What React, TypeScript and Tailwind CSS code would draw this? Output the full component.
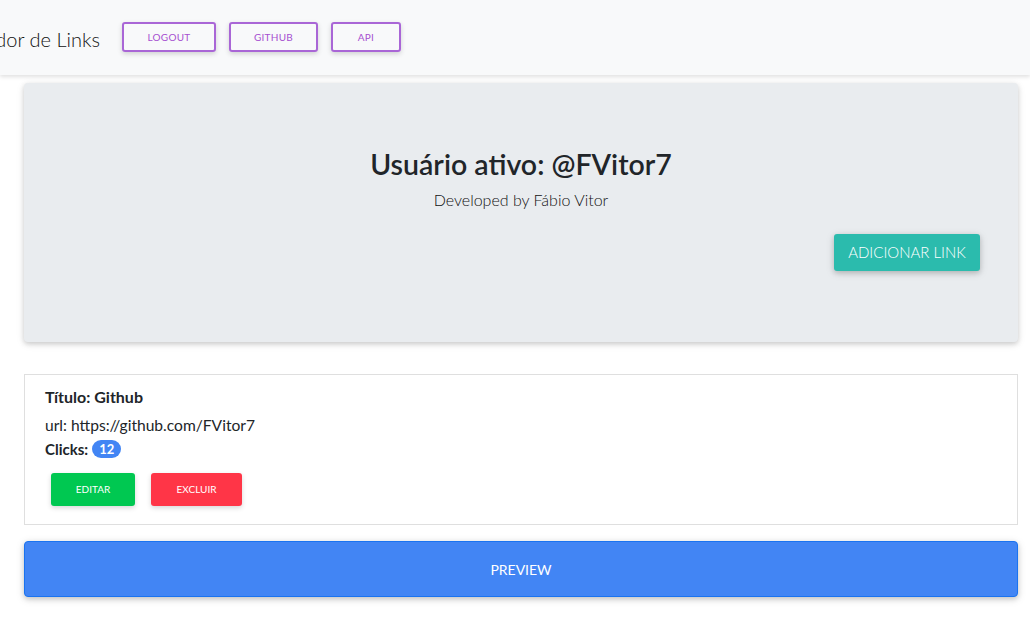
import React from 'react';

const font = { fontFamily: 'Lato, "Open Sans", sans-serif' };

function NavButton({ label, width }: { label: string; width: string }) {
  return (
    <button
      className={`h-[30px] ${width} border-2 border-[#a966d6] rounded-[3px] bg-transparent text-[10px] font-normal text-[#a64fd0] uppercase tracking-wide shadow-[0_2px_5px_rgba(0,0,0,0.16)]`}
    >
      {label}
    </button>
  );
}

export default function App() {
  return (
    <div className="min-h-[626px] w-[1030px] bg-white overflow-hidden" style={font}>
      {/* Navbar */}
      <nav className="h-[75px] bg-[#f8f9fa] shadow-[0_2px_4px_rgba(0,0,0,0.12)] flex items-center relative z-10">
        <div className="w-[100px] overflow-hidden flex justify-end whitespace-nowrap">
          <span className="text-[20px] font-light text-[#111] pt-[2px]">Gerenciador de Links</span>
        </div>
        <div className="flex items-center gap-[13px] ml-[22px] mb-[1px]">
          <NavButton label="Logout" width="w-[94px]" />
          <NavButton label="Github" width="w-[89px]" />
          <NavButton label="Api" width="w-[70px]" />
        </div>
      </nav>

      <main className="ml-[24px] w-[994px]">
        {/* Jumbotron */}
        <section className="mt-[8px] h-[259px] bg-[#e9ecef] rounded-[4px] shadow-[0_2px_5px_rgba(0,0,0,0.16),0_2px_10px_rgba(0,0,0,0.08)] flex flex-col items-center pt-[64px] relative">
          <h1 className="text-[28.5px] font-semibold text-[#212529] leading-[34px]">Usuário ativo: @FVitor7</h1>
          <p className="mt-[7px] text-[16px] font-light text-[#111]">Developed by Fábio Vitor</p>
          <div className="self-end mr-[38px] mt-[22px]">
            <button className="h-[37px] w-[146px] rounded-[3px] bg-[#2bbbad] text-white text-[15px] font-light uppercase shadow-[0_2px_5px_rgba(0,0,0,0.16),0_2px_10px_rgba(0,0,0,0.12)]">
              Adicionar Link
            </button>
          </div>
        </section>

        {/* Link card */}
        <section className="mt-[32px] h-[151px] border border-[#dfdfdf] bg-white px-[20px] pt-[11px]">
          <h3 className="text-[16px] font-bold text-[#212529] leading-[22px]">Título: Github</h3>
          <p className="mt-[7px] text-[15.6px] text-[#212529] leading-[20px]">url: https://github.com/FVitor7</p>
          <p className="mt-[3px] text-[15px] font-bold text-[#212529] leading-[22px] flex items-center">
            Clicks:
            <span className="ml-[4px] inline-flex items-center justify-center h-[18px] px-[7px] rounded-full bg-[#4285f4] text-white text-[13px] font-bold">
              12
            </span>
          </p>
          <div className="flex gap-[16px] mt-[13px] ml-[6px]">
            <button className="h-[33px] w-[84px] rounded-[3px] bg-[#00c851] text-white text-[10px] uppercase shadow-[0_2px_5px_rgba(0,0,0,0.16)]">
              Editar
            </button>
            <button className="h-[33px] w-[91px] rounded-[3px] bg-[#ff3547] text-white text-[10px] uppercase shadow-[0_2px_5px_rgba(0,0,0,0.16)]">
              Excluir
            </button>
          </div>
        </section>

        {/* Preview */}
        <button className="mt-[16px] w-full h-[56px] rounded-[4px] bg-[#4285f4] border border-[#1a73f0] text-white text-[14px] font-normal uppercase shadow-[0_2px_5px_rgba(0,0,0,0.16),0_2px_10px_rgba(0,0,0,0.12)]">
          Preview
        </button>
      </main>
    </div>
  );
}
